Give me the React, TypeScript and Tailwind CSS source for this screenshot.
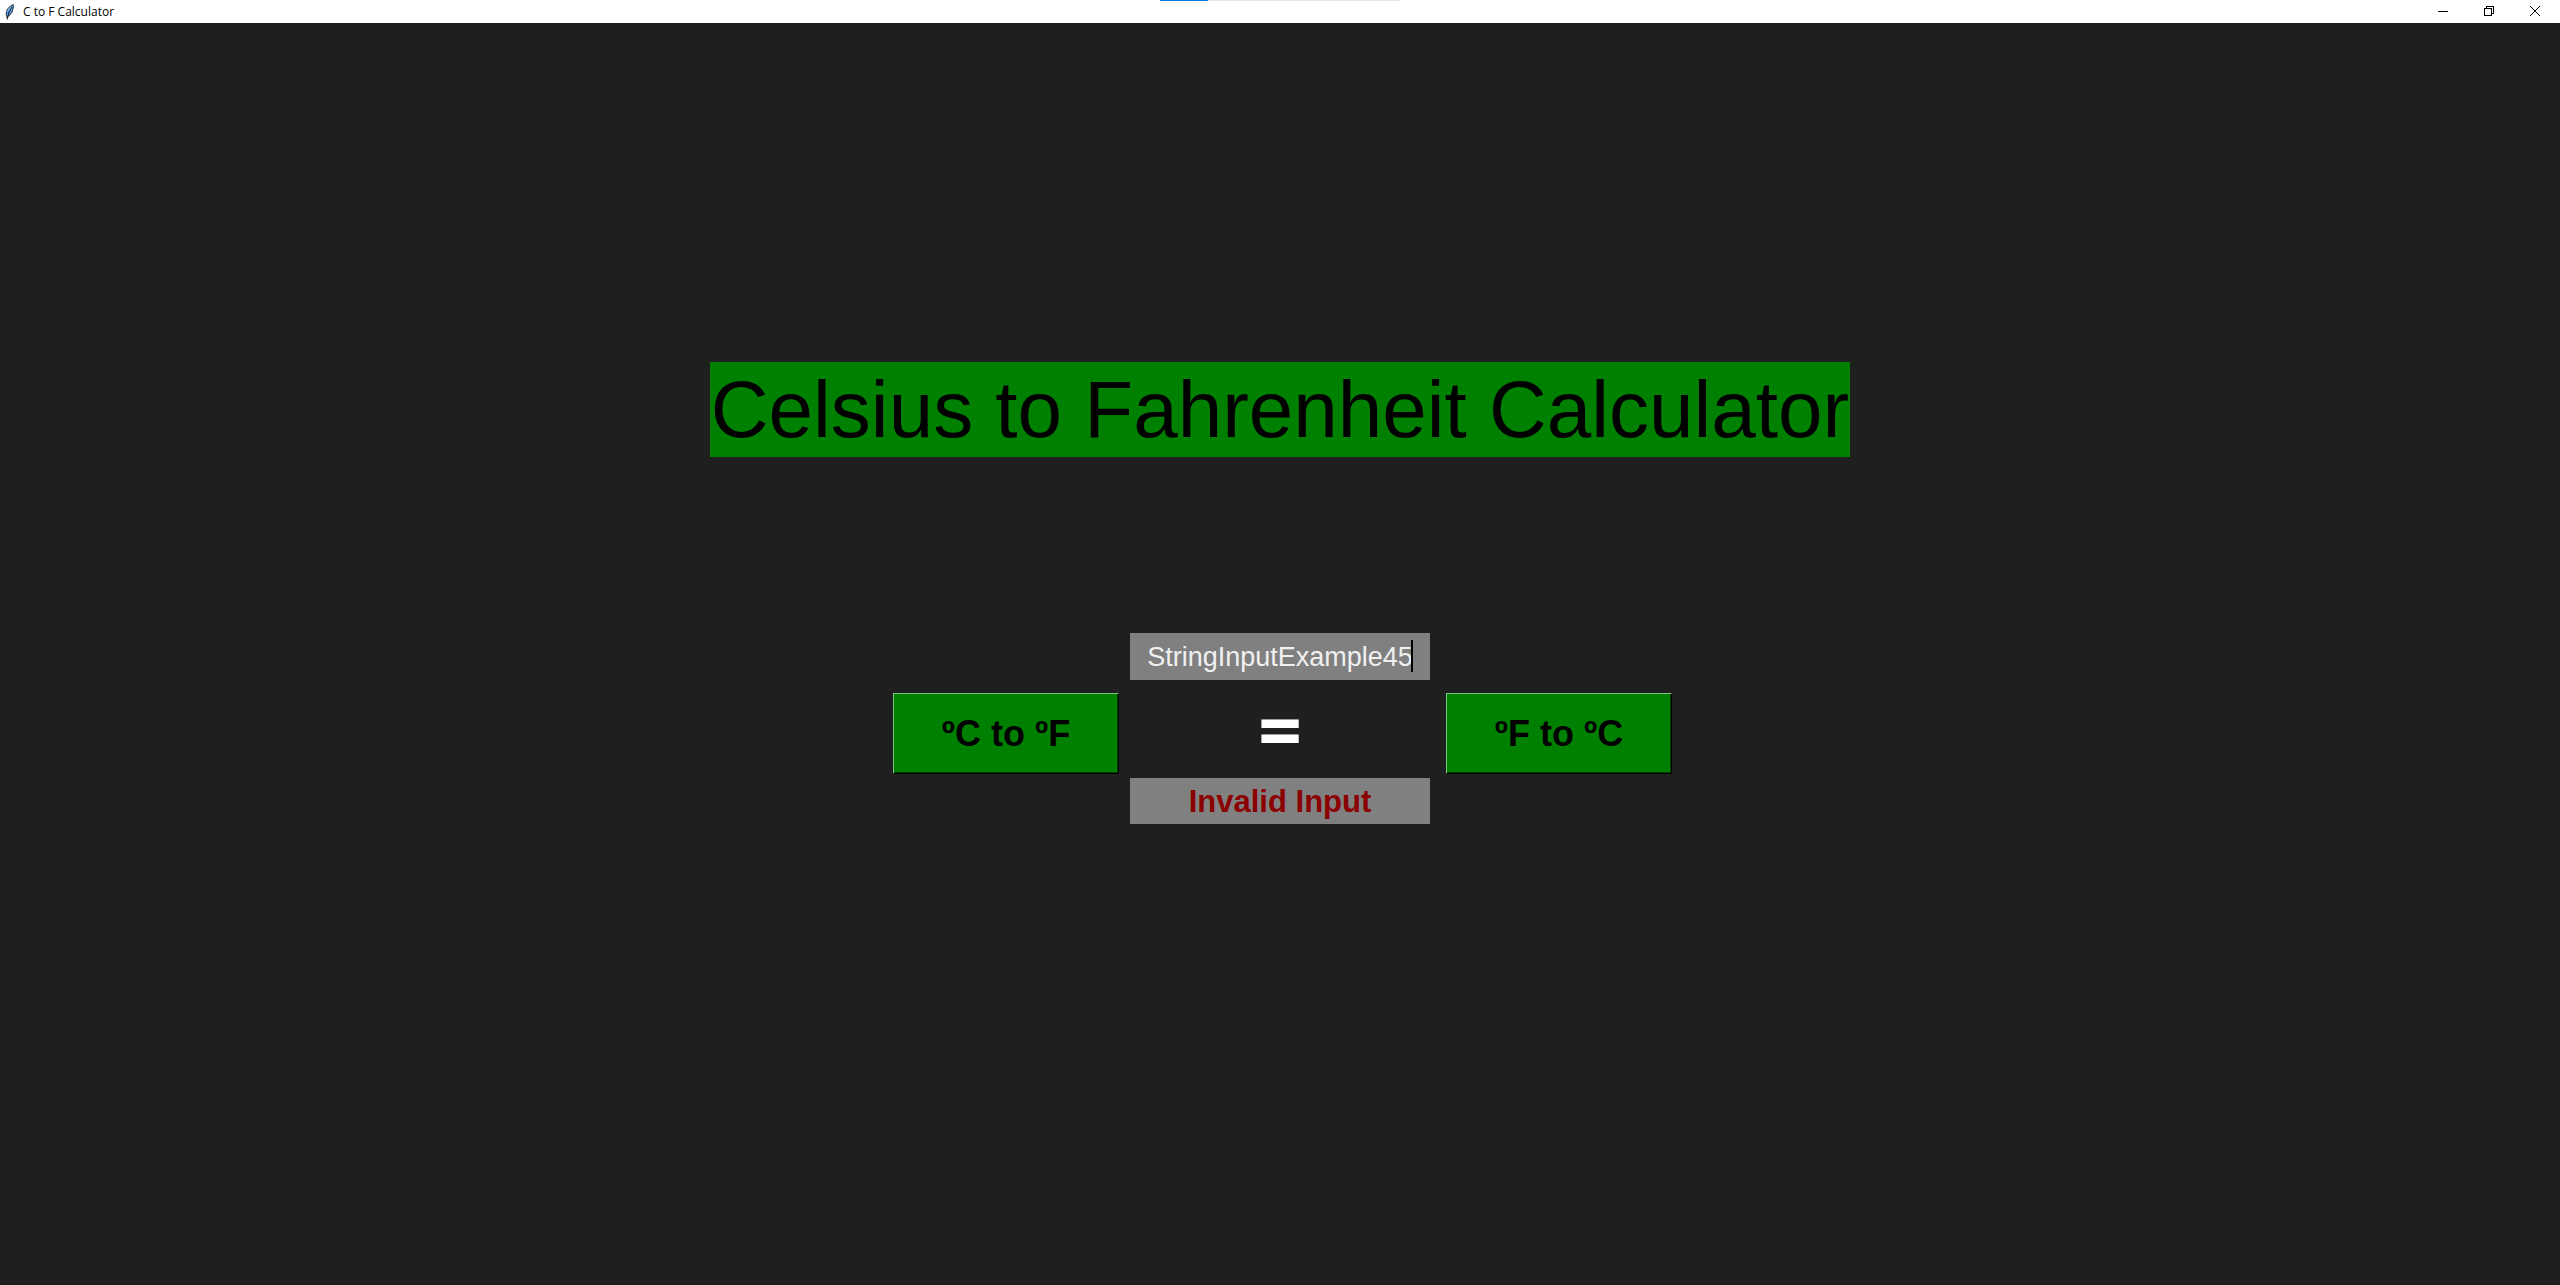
import { useState } from "react";

function FeatherIcon() {
  return (
    <svg width="16" height="16" viewBox="0 0 16 16" aria-hidden="true">
      <path d="M4 13.5 L3.2 10.5 L3.4 7.5 L5 4.5 L7.5 2 L10.3 .6 L10.3 4 L9 8 L7 11 L4.8 12.5 Z" fill="#5b9ae0" stroke="#1b2a3a" strokeWidth=".9" />
      <path d="M8.8 3 L5.8 8.5 L4.2 15.5" fill="none" stroke="#111820" strokeWidth="1" />
      <path d="M8 2.8 L4.6 7.5" fill="none" stroke="#a9cdf5" strokeWidth="1" />
    </svg>
  );
}

function TitleBar() {
  return (
    <header className="relative flex h-[23px] items-center justify-between bg-white text-black">
      <div className="flex items-center gap-1 pl-[3px]">
        <FeatherIcon />
        <span className="font-['Open_Sans',sans-serif] text-[12px] leading-4">C to F Calculator</span>
      </div>
      <div className="absolute top-0 left-1/2 flex h-px w-[240px] -translate-x-1/2 bg-[#e5e5e5]">
        <div className="w-[48px] bg-[#0078d7]" />
      </div>
      <div className="flex h-full pr-0.5 pb-0.5">
        <button aria-label="Minimize" className="flex w-[46px] items-center justify-center">
          <svg width="10" height="10" shapeRendering="crispEdges"><path d="M0 5h10v1H0z" /></svg>
        </button>
        <button aria-label="Restore" className="flex w-[46px] items-center justify-center">
          <svg width="10" height="10" fill="none" stroke="#000" shapeRendering="crispEdges">
            <path d="M.5 2.5h7v7h-7zM2.5 2.5v-2h7v7h-2" />
          </svg>
        </button>
        <button aria-label="Close" className="flex w-[46px] items-center justify-center">
          <svg width="10" height="10" fill="none" stroke="#000"><path d="M0 0L10 10M10 0L0 10" /></svg>
        </button>
      </div>
    </header>
  );
}

function ConvertButton({ label, onClick, className }: { label: string; onClick: () => void; className: string }) {
  return (
    <button
      onClick={onClick}
      className={`h-[81px] w-[226px] border border-t-[#80c080] border-r-black border-b-black border-l-[#80c080] bg-[#008000] text-[36px] leading-10 font-bold text-black shadow-[inset_-1px_-1px_0_#004000] ${className}`}
    >
      {label}
    </button>
  );
}

export default function App() {
  const [value, setValue] = useState("StringInputExample45");
  const [result, setResult] = useState("Invalid Input");

  const convert = (formula: (n: number) => number) => {
    const n = Number(value);
    setResult(value.trim() === "" || Number.isNaN(n) ? "Invalid Input" : formula(n).toFixed(2));
  };

  return (
    <div className="flex min-h-screen flex-col bg-[#1f1f1f] font-['Liberation_Sans',Arial,sans-serif]">
      <TitleBar />
      <main className="flex flex-1 flex-col items-center pt-[339px]">
        <h1 className="bg-[#008000] px-px text-[80px] leading-[95px] text-black">Celsius to Fahrenheit Calculator</h1>
        <div className="mt-44 grid w-full grid-cols-[1fr_300px_1fr]">
          <div className="relative col-start-2 h-[47px] bg-[#808080]">
            <input
              aria-label="Temperature"
              value={value}
              onChange={(e) => setValue(e.target.value)}
              className="h-full w-full pt-0.5 text-center text-[27px] text-[#f0f0f0] outline-none"
            />
            <span className="absolute top-[7px] right-[17px] h-8 w-0.5 bg-black" />
          </div>
          <div className="col-span-3 grid grid-cols-subgrid items-center pt-[13px] pb-1">
            <ConvertButton label="ºC to ºF" onClick={() => convert((c) => (c * 9) / 5 + 32)} className="mr-[11px] justify-self-end" />
            <span className="pb-3 text-center font-['Lato',sans-serif] text-[83px] leading-[69px] font-black text-white">=</span>
            <ConvertButton label="ºF to ºC" onClick={() => convert((f) => ((f - 32) * 5) / 9)} className="ml-4 justify-self-start" />
          </div>
          <output className="col-start-2 bg-[#808080] pt-0.5 text-center text-[31px] leading-[44px] font-bold text-[#8b0000]">{result}</output>
        </div>
      </main>
    </div>
  );
}
